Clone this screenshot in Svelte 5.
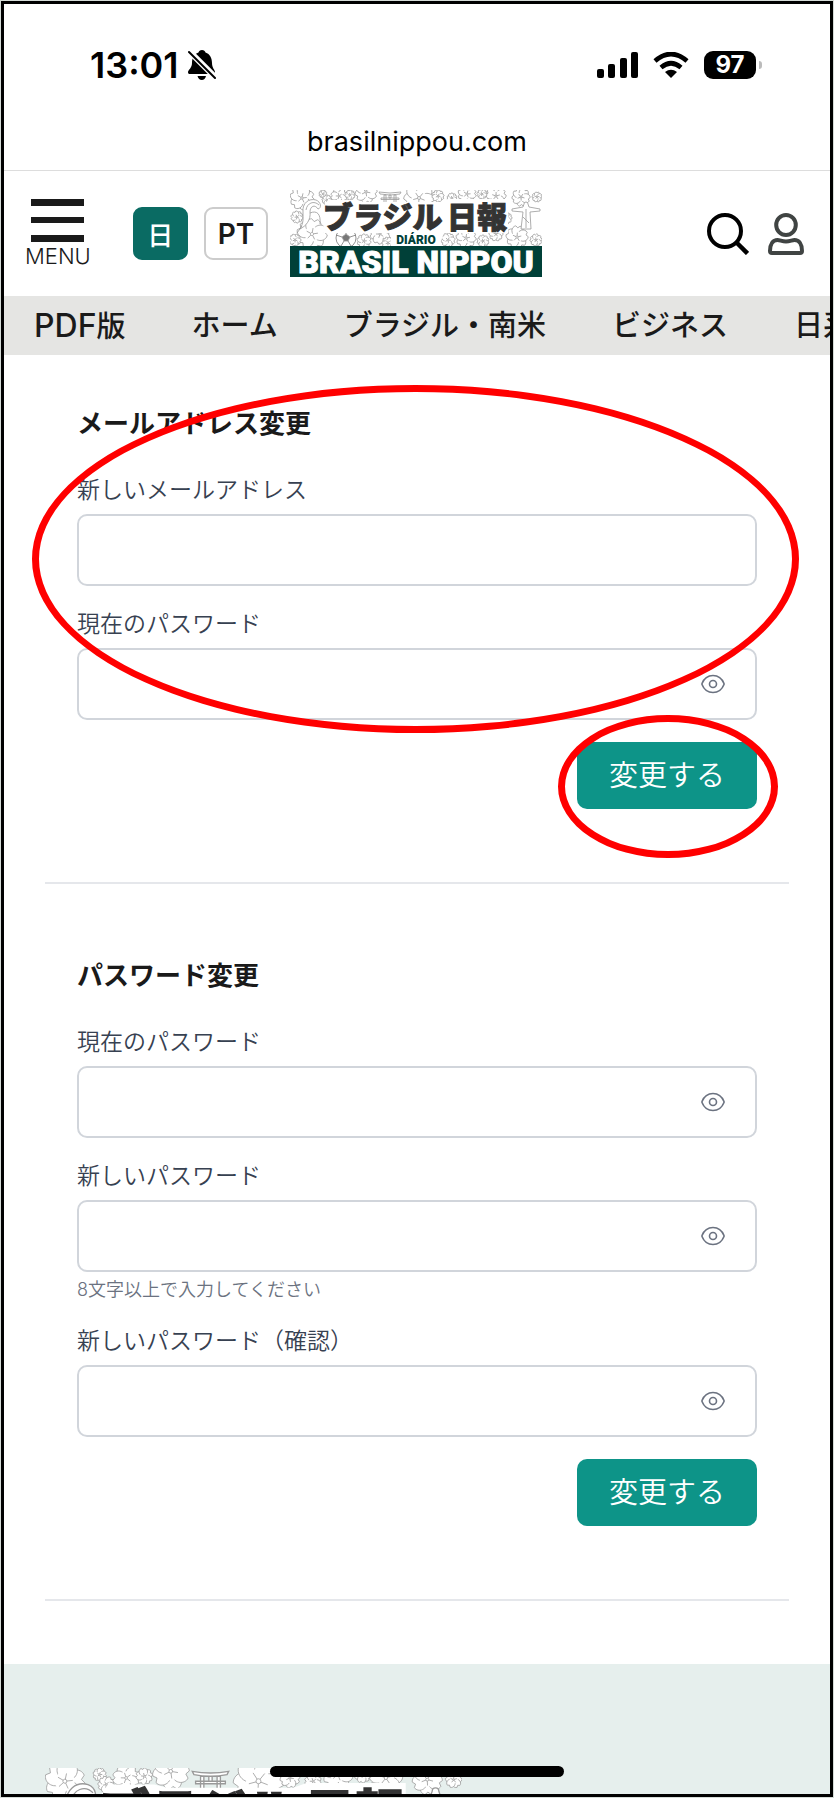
<script lang="ts">
  interface Field {
    id: string;
    label: string;
    type: 'email' | 'password';
    hint?: string;
  }

  interface AccountForm {
    id: string;
    title: string;
    fields: Field[];
  }

  const categories = [
    { latin: 'PDF', name: '版' },
    { name: 'ホーム' },
    { name: 'ブラジル・南米' },
    { name: 'ビジネス' },
    { name: '日系社会' }
  ];

  const forms: AccountForm[] = [
    {
      id: 'email',
      title: 'メールアドレス変更',
      fields: [
        { id: 'new-email', label: '新しいメールアドレス', type: 'email' },
        { id: 'email-password', label: '現在のパスワード', type: 'password' }
      ]
    },
    {
      id: 'password',
      title: 'パスワード変更',
      fields: [
        { id: 'current-password', label: '現在のパスワード', type: 'password' },
        {
          id: 'new-password',
          label: '新しいパスワード',
          type: 'password',
          hint: '8文字以上で入力してください'
        },
        { id: 'confirm-password', label: '新しいパスワード（確認）', type: 'password' }
      ]
    }
  ];

  // x, y, radius of each blossom behind the masthead
  const flowers = [
    [12, 8, 12], [33, 4, 4], [37, 10, 5], [49, 6, 8], [60, 5, 5], [76, 2, 11],
    [129, 8, 15], [148, 6, 6], [162, 8, 5], [177, 4, 9], [206, 6, 10], [192, 4, 5],
    [231, 7, 9], [247, 7, 5], [7, 27, 6], [22, 44, 15], [5, 50, 6], [74, 51, 7],
    [90, 44, 10], [98, 53, 6], [158, 50, 7], [176, 48, 10], [193, 51, 6], [206, 44, 7],
    [227, 47, 11], [246, 50, 6], [216, 28, 6]
  ];
  const petals = [0, 72, 144, 216, 288];

  let shown = $state<Record<string, boolean>>({});
  let lang = $state('ja');

  const toggle = (id: string) => {
    shown[id] = !shown[id];
  };

  const handleSubmit = (event: SubmitEvent) => {
    event.preventDefault();
  };
</script>

{#snippet masthead()}
  <svg class="masthead" viewBox="0 0 252 87" role="img" aria-label="ブラジル日報">
    <g fill="#fff" stroke="#999" stroke-width="0.8">
      {#each flowers as [x, y, r]}
        <g transform={`translate(${x} ${y}) scale(${r / 10}) rotate(${x * 7})`}>
          {#each petals as angle}
            <path
              transform={`rotate(${angle})`}
              d="M0 0C-7-2-6-9-2-10L0-8.4 2-10C6-9 7-2 0 0Z"
              vector-effect="non-scaling-stroke"
            />
          {/each}
          <circle r="5" stroke="none" />
          {#each petals as angle}
            <path transform={`rotate(${angle})`} d="M0-1V-4" vector-effect="non-scaling-stroke" />
          {/each}
          <circle r="1" vector-effect="non-scaling-stroke" />
        </g>
      {/each}
      <!-- macaw -->
      <path d="M13 22C12 13 19 8 26 10 31 12 32 18 28 19 25 14 20 16 20 22 21 30 16 36 10 39 14 32 13 28 13 22Z" />
      <path d="M16 20C17 13 24 10 29 15M20 23C27 20 31 24 30 34M12 36L7 43" fill="none" />
      <!-- torii -->
      <path d="M89 2Q100 4 111 2L110 4Q100 6 90 4ZM91 8H109V9.500H91ZM94 5H96V18H94ZM104 5H106V18H104ZM99 5H101V8H99Z" />
      <!-- statue -->
      <path d="M234 14A2 2 0 1 1 238 14L239 17 250 19V21L240 22 241 39H231L233 22 222 21V19L233 17Z" />
      <path d="M236 19V38M233 27L239 33" />
      <!-- football -->
      <circle cx="56" cy="48" r="10" stroke="#777" />
      <path d="M56 44L60 47 58 51H54L52 47Z" fill="#777" />
      <path d="M56 44V38M60 47L66 45M58 51L61 56M54 51L51 56M52 47L46 45" stroke="#777" />
    </g>
    <path d="M32 19L38 10H66L74 12H150L158 9H218V43H154L149 56H101V43H34Z" fill="#fff" />
    <rect y="56" width="252" height="31" fill="#004038" />
    <text class="kana" x="33" y="38">ブラジル</text>
    <text class="kana" x="157" y="38">日報</text>
    <text class="diario" x="126" y="54" text-anchor="middle">DIÁRIO</text>
    <text class="brand" x="126" y="83" text-anchor="middle">BRASIL NIPPOU</text>
  </svg>
{/snippet}

<div class="phone">
  <div class="status">
    <div class="clock">
      <span>13:01</span>
      <svg width="28" height="30" viewBox="0 0 28 30" aria-hidden="true">
        <path d="M14 0C16 0 17 1 17.500 2.500 22 4 24 8 24 13 24 18 27 20 27 22 27 23.500 26.500 24 25 24H2C.5 24 0 23.500 0 22 0 20 4 18 4 13 4 8 6 4 10.500 2.500 11 1 12 0 14 0ZM9.500 26H18Q17 30 13.800 30T9.500 26Z" />
        <path d="M-1-1L29 29" stroke="#fff" stroke-width="6" />
        <path d="M1 2L27 28" stroke="#000" stroke-width="2" stroke-linecap="round" />
      </svg>
    </div>
    <div class="signals">
      <svg width="41" height="26" viewBox="0 0 41 26" aria-hidden="true">
        <rect y="17" width="7" height="9" rx="2" />
        <rect x="11" y="12" width="7" height="14" rx="2" />
        <rect x="23" y="6" width="7" height="20" rx="2" />
        <rect x="34" width="7" height="26" rx="2" />
      </svg>
      <svg width="36" height="26" viewBox="0 0 36 26" aria-hidden="true">
        <path d="M2 9Q18-5 34 9M8 15.500Q18 7 28 15.500" fill="none" stroke="#000" stroke-width="4.600" />
        <path d="M12 20Q18 15.500 24 20L18 26Z" />
      </svg>
      <div class="battery"><span>97</span></div>
    </div>
  </div>
  <div class="address">brasilnippou.com</div>

  <header>
    <div class="tools">
      <button class="menu" type="button">
        <svg width="53" height="43" viewBox="0 0 53 43" aria-hidden="true">
          <path d="M0 0H53V7H0ZM0 18H53V24H0ZM0 36H53V43H0Z" />
        </svg>
        MENU
      </button>
      <div class="langs">
        <button type="button" class="lang" class:active={lang === 'ja'} onclick={() => (lang = 'ja')}>日</button>
        <button type="button" class="lang" class:active={lang === 'pt'} onclick={() => (lang = 'pt')}>PT</button>
      </div>
      <a class="logo" href="#top">{@render masthead()}</a>
    </div>
    <div class="actions">
      <button type="button" aria-label="検索">
        <svg width="42" height="42" viewBox="0 0 42 42" fill="none" stroke="#000" aria-hidden="true">
          <circle cx="18" cy="18" r="16" stroke-width="4" />
          <path d="M29 29L40.500 40.500" stroke-width="4.500" />
        </svg>
      </button>
      <button type="button" aria-label="アカウント">
        <svg width="38" height="42" viewBox="0 0 38 42" fill="none" stroke="#404443" stroke-width="4" aria-hidden="true">
          <ellipse cx="19" cy="12" rx="9.800" ry="10" />
          <path d="M10.500 27C13 27 15 28.500 19 28.500S25 27 27.500 27C32 27 35 31 35 38 35 39.500 34.500 40 33 40H5C3.500 40 3 39.500 3 38 3 31 6 27 10.500 27Z" />
        </svg>
      </button>
    </div>
  </header>

  <nav>
    {#each categories as { latin, name }}
      <a href="#top">{#if latin}<span class="latin">{latin}</span>{/if}{name}</a>
    {/each}
  </nav>

  <main>
    {#each forms as form (form.id)}
      <section>
        <form onsubmit={handleSubmit}>
          <h2>{form.title}</h2>
          {#each form.fields as field (field.id)}
            <div class="field">
              <label for={field.id}>{field.label}</label>
              <div class="box">
                <input id={field.id} type={shown[field.id] ? 'text' : field.type} autocomplete="off" />
                {#if field.type === 'password'}
                  <button type="button" class="eye" aria-label="パスワードを表示" onclick={() => toggle(field.id)}>
                    <svg width="24" height="20" viewBox="0 0 24 20" fill="none" stroke="currentColor" stroke-width="1.600" aria-hidden="true">
                      <path d="M1 10.500V9.500C3 4.500 7 1.500 12 1.500S21 4.500 23 9.500V10.500C21 15.500 17 18.500 12 18.500S3 15.500 1 10.500Z" />
                      <circle cx="12" cy="10" r="3.500" />
                    </svg>
                  </button>
                {/if}
              </div>
              {#if field.hint}
                <p class="hint">{field.hint}</p>
              {/if}
            </div>
          {/each}
          <button class="submit" type="submit">変更する</button>
        </form>
        {#if form.id === 'email'}
          <span class="ring ring-form"></span>
          <span class="ring ring-button"></span>
        {/if}
      </section>
    {/each}
  </main>

  <footer>
    {@render masthead()}
  </footer>
  <div class="home-bar"></div>
</div>

<style>
  :global(body) {
    background: #d5dbd7;
  }

  .phone {
    position: relative;
    box-sizing: border-box;
    display: flex;
    flex-direction: column;
    height: calc(100vh - 2px);
    margin: 1px;
    overflow: hidden;
    border: 3px solid #000;
    background: #fff;
    color: #1a1a1a;
    font-family: Inter, 'Noto Sans CJK JP', sans-serif;
  }

  .phone > * {
    flex-shrink: 0;
  }

  button {
    padding: 0;
    border: none;
    background: none;
    color: inherit;
    font: inherit;
    cursor: pointer;
  }

  svg {
    display: block;
  }

  a {
    color: inherit;
    text-decoration: none;
  }

  .status {
    display: flex;
    align-items: center;
    justify-content: space-between;
    padding: 36px 74px 0 86px;
    color: #000;
  }

  .clock {
    display: flex;
    align-items: center;
    gap: 9px;
    font-size: 36px;
    font-weight: 600;
    line-height: 50px;
  }

  .signals {
    display: flex;
    align-items: center;
    gap: 15px;
  }

  .battery {
    position: relative;
    width: 52px;
    border-radius: 9px;
    background: #000;
    color: #fff;
    font-size: 24px;
    font-weight: 700;
    line-height: 28px;
    text-align: center;
  }

  .battery::after {
    content: '';
    position: absolute;
    top: 10px;
    right: -6px;
    width: 3px;
    height: 8px;
    border-radius: 0 3px 3px 0;
    background: #bbb;
  }

  .address {
    padding: 32px 0 8px;
    border-bottom: 1px solid #ddd;
    color: #000;
    font-size: 27px;
    line-height: 40px;
    text-align: center;
  }

  header {
    display: flex;
    align-items: center;
    justify-content: space-between;
    height: 125px;
    padding: 0 25px 0 21px;
  }

  .tools {
    display: flex;
    align-items: center;
  }

  .menu {
    display: flex;
    flex-direction: column;
    align-items: center;
    gap: 2px;
    font-size: 22px;
    font-weight: 300;
    line-height: 24px;
  }

  .menu svg {
    fill: #1a1a1a;
  }

  .langs {
    display: flex;
    gap: 16px;
    margin: 0 22px 0 42px;
  }

  .lang {
    box-sizing: border-box;
    min-width: 55px;
    height: 53px;
    padding: 0 12px;
    border: 2px solid #ccc;
    border-radius: 9px;
    font-size: 28px;
    font-weight: 600;
  }

  .lang.active {
    border-color: #0a6b63;
    background: #0a6b63;
    color: #fff;
    font-size: 26px;
    font-weight: 500;
  }

  .masthead {
    width: 100%;
  }

  .logo {
    width: 252px;
  }

  .kana {
    fill: #333;
    stroke: #333;
    stroke-width: 1px;
    font: 900 30px 'Noto Sans CJK JP', sans-serif;
  }

  .diario {
    fill: #004038;
    font: 900 12px Roboto, sans-serif;
  }

  .brand {
    fill: #fff;
    stroke: #fff;
    stroke-width: 1px;
    font: 900 32px Roboto, sans-serif;
  }

  .actions {
    display: flex;
    gap: 18px;
  }

  nav {
    display: flex;
    gap: 66px;
    padding: 0 0 0 30px;
    overflow: hidden;
    background: #e5e5e3;
    font-size: 29px;
    font-weight: 500;
    line-height: 59px;
    white-space: nowrap;
  }

  nav a {
    height: 59px;
  }

  .latin {
    font-size: 32px;
  }

  main {
    padding: 0 41px 63px;
  }

  section {
    position: relative;
    padding: 74px 32px 73px;
    border-bottom: 2px solid #e5e7eb;
  }

  section:first-child {
    padding-top: 51px;
  }

  form {
    display: flex;
    flex-direction: column;
  }

  h2 {
    margin: 0 0 32px;
    font-size: 26px;
    font-weight: 700;
    line-height: 36px;
  }

  .field {
    margin-bottom: 22px;
  }

  label {
    display: block;
    margin-bottom: 8px;
    color: #374151;
    font-size: 23px;
    font-weight: 350;
    line-height: 32px;
  }

  .box {
    position: relative;
  }

  input {
    display: block;
    box-sizing: border-box;
    width: 100%;
    height: 72px;
    padding: 0 72px 0 20px;
    border: 2px solid #d1d5db;
    border-radius: 10px;
    background: #fff;
    font: inherit;
    font-size: 26px;
  }

  .eye {
    position: absolute;
    top: 0;
    right: 32px;
    height: 72px;
    color: #6b7280;
  }

  .hint {
    margin: 4px 0 0;
    color: #6b7280;
    font-size: 18px;
    font-weight: 350;
    line-height: 27px;
  }

  .submit {
    align-self: flex-end;
    padding: 0 32px;
    border-radius: 10px;
    background: #0d9488;
    color: #fff;
    font-size: 29px;
    font-weight: 350;
    line-height: 67px;
  }

  .ring {
    position: absolute;
    box-sizing: border-box;
    border: 7px solid #f00;
    border-radius: 50%;
    pointer-events: none;
  }

  .ring-form {
    top: 30px;
    right: -10px;
    left: -13px;
    height: 348px;
  }

  .ring-button {
    top: 360px;
    right: 11px;
    width: 220px;
    height: 143px;
  }

  footer {
    padding: 104px 41px 0;
    background: #e6efed;
  }

  footer .masthead {
    max-width: 417px;
  }

  .home-bar {
    position: absolute;
    bottom: 17px;
    left: 50%;
    width: 294px;
    height: 11px;
    border-radius: 6px;
    background: #000;
    transform: translateX(-50%);
  }
</style>
